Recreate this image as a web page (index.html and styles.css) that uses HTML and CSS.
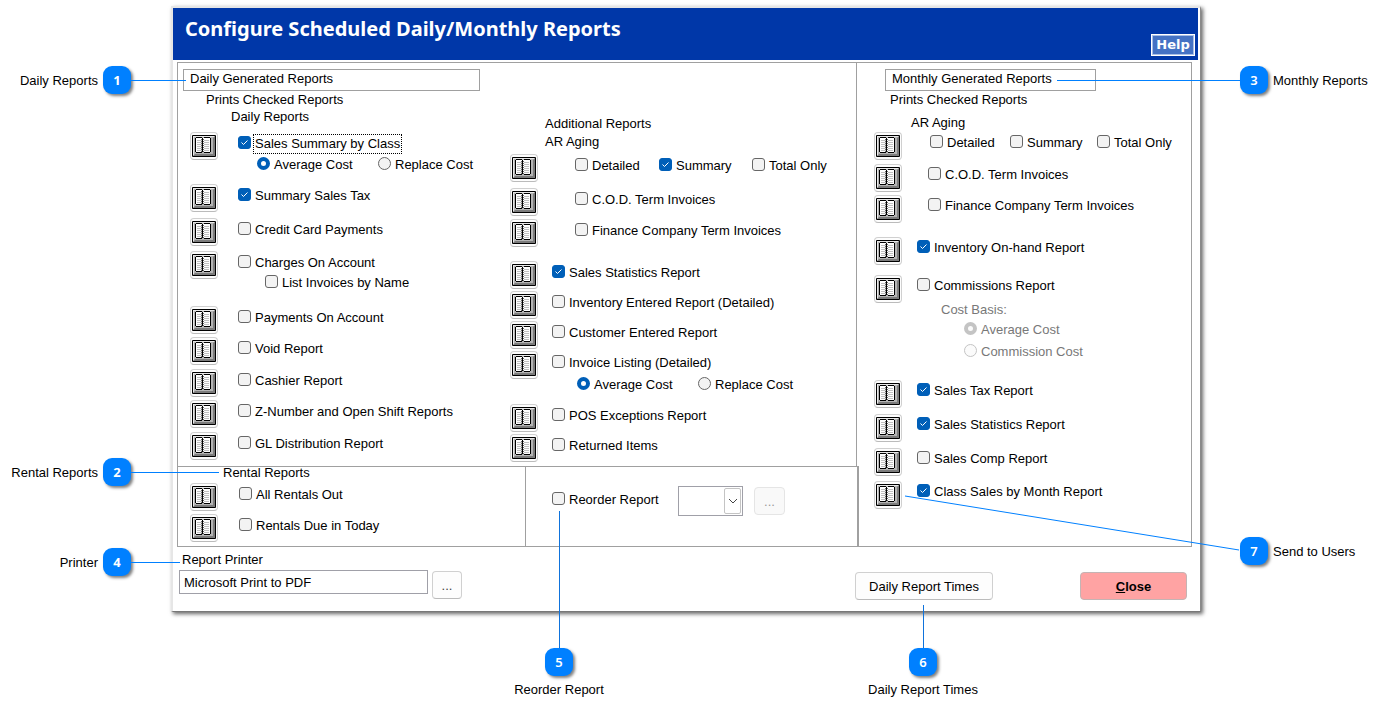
FILE: index.html
```html
<!DOCTYPE html>
<html lang="en">
<head>
<meta charset="utf-8">
<title>Configure Scheduled Daily/Monthly Reports</title>
<link rel="stylesheet" href="styles.css">
</head>
<body>
<svg class="defs" aria-hidden="true">
  <symbol id="book" viewBox="0 0 24 22">
    <rect width="24" height="22" rx="1" fill="#000"/>
    <rect x="1" y="1" width="22" height="20" fill="#b4b4b4"/>
    <path d="M1 1h22l-1 1H2v18l-1 1z" fill="#e8e8e8"/>
    <path d="M23 1v20H1l2-2h18V3z" fill="#7c7c7c"/>
    <rect x="4" y="3" width="14" height="14" fill="#fff"/>
    <path d="M5 5.500h5M5 7.500h5M5 9.500h5M5 11.500h5M5 13.500h5M5 15.500h5M12 5.500h5M12 7.500h5M12 9.500h5M12 11.500h5M12 13.500h5M12 15.500h5" stroke="#c0c0c0"/>
    <path d="M4 2.500h6M12 2.500h6M4 17.500h6M12 17.500h6M3.500 3v14M18.500 3v14M10.500 3v14" stroke="#000"/>
    <path d="M11.500 4v14M9.500 4v13" stroke="#000" stroke-dasharray="1 1" stroke-opacity=".6"/>
  </symbol>
</svg>
<main class="stage">
  <div class="window">
    <header class="titlebar">
      <h1>Configure Scheduled Daily/Monthly Reports</h1>
      <button class="help" type="button">Help</button>
    </header>

    <form class="panel">
      <div class="panel-left">
        <div class="upper">
          <section class="daily">
            <h2 class="boxed">Daily Generated Reports</h2>
            <p class="hint">Prints Checked Reports</p>
            <h3 class="sub">Daily Reports</h3>
            <ul class="rows">
              <li><button class="book" type="button" aria-label="Sales Summary users"><svg><use href="#book"/></svg></button>
                <div class="body"><label class="focused"><input type="checkbox" checked><span>Sales Summary by Class</span></label>
                  <div class="radios"><label><input type="radio" name="dcost" checked><span>Average Cost</span></label><label><input type="radio" name="dcost"><span>Replace Cost</span></label></div></div></li>
              <li><button class="book" type="button" aria-label="Sales Tax users"><svg><use href="#book"/></svg></button>
                <div class="body"><label><input type="checkbox" checked><span>Summary Sales Tax</span></label></div></li>
              <li><button class="book" type="button" aria-label="Credit Card users"><svg><use href="#book"/></svg></button>
                <div class="body"><label><input type="checkbox"><span>Credit Card Payments</span></label></div></li>
              <li><button class="book" type="button" aria-label="Charges users"><svg><use href="#book"/></svg></button>
                <div class="body"><label><input type="checkbox"><span>Charges On Account</span></label>
                  <div class="nested"><label><input type="checkbox"><span>List Invoices by Name</span></label></div></div></li>
              <li><button class="book" type="button" aria-label="Payments users"><svg><use href="#book"/></svg></button>
                <div class="body"><label><input type="checkbox"><span>Payments On Account</span></label></div></li>
              <li><button class="book" type="button" aria-label="Void users"><svg><use href="#book"/></svg></button>
                <div class="body"><label><input type="checkbox"><span>Void Report</span></label></div></li>
              <li><button class="book" type="button" aria-label="Cashier users"><svg><use href="#book"/></svg></button>
                <div class="body"><label><input type="checkbox"><span>Cashier Report</span></label></div></li>
              <li><button class="book" type="button" aria-label="Z-Number users"><svg><use href="#book"/></svg></button>
                <div class="body"><label><input type="checkbox"><span>Z-Number and Open Shift Reports</span></label></div></li>
              <li><button class="book" type="button" aria-label="GL Distribution users"><svg><use href="#book"/></svg></button>
                <div class="body"><label><input type="checkbox"><span>GL Distribution Report</span></label></div></li>
            </ul>
          </section>

          <section class="additional">
            <h2 class="plain">Additional Reports</h2>
            <h3 class="plain">AR Aging</h3>
            <ul class="rows">
              <li><button class="book" type="button" aria-label="AR Aging users"><svg><use href="#book"/></svg></button>
                <div class="body inset"><div class="aging"><label><input type="checkbox"><span>Detailed</span></label><label><input type="checkbox" checked><span>Summary</span></label><label><input type="checkbox"><span>Total Only</span></label></div></div></li>
              <li><button class="book" type="button" aria-label="C.O.D. users"><svg><use href="#book"/></svg></button>
                <div class="body inset"><label><input type="checkbox"><span>C.O.D. Term Invoices</span></label></div></li>
              <li><button class="book" type="button" aria-label="Finance users"><svg><use href="#book"/></svg></button>
                <div class="body inset"><label><input type="checkbox"><span>Finance Company Term Invoices</span></label></div></li>
              <li><button class="book" type="button" aria-label="Statistics users"><svg><use href="#book"/></svg></button>
                <div class="body"><label><input type="checkbox" checked><span>Sales Statistics Report</span></label></div></li>
              <li><button class="book" type="button" aria-label="Inventory users"><svg><use href="#book"/></svg></button>
                <div class="body"><label><input type="checkbox"><span>Inventory Entered Report (Detailed)</span></label></div></li>
              <li><button class="book" type="button" aria-label="Customer users"><svg><use href="#book"/></svg></button>
                <div class="body"><label><input type="checkbox"><span>Customer Entered Report</span></label></div></li>
              <li><button class="book" type="button" aria-label="Invoice users"><svg><use href="#book"/></svg></button>
                <div class="body"><label><input type="checkbox"><span>Invoice Listing (Detailed)</span></label>
                  <div class="radios"><label><input type="radio" name="acost" checked><span>Average Cost</span></label><label><input type="radio" name="acost"><span>Replace Cost</span></label></div></div></li>
              <li><button class="book" type="button" aria-label="POS users"><svg><use href="#book"/></svg></button>
                <div class="body"><label><input type="checkbox"><span>POS Exceptions Report</span></label></div></li>
              <li><button class="book" type="button" aria-label="Returned users"><svg><use href="#book"/></svg></button>
                <div class="body"><label><input type="checkbox"><span>Returned Items</span></label></div></li>
            </ul>
          </section>
        </div>

        <div class="lower">
          <section class="rental">
            <h2>Rental Reports</h2>
            <ul class="rows">
              <li><button class="book" type="button" aria-label="All Rentals users"><svg><use href="#book"/></svg></button>
                <div class="body"><label><input type="checkbox"><span>All Rentals Out</span></label></div></li>
              <li><button class="book" type="button" aria-label="Rentals Due users"><svg><use href="#book"/></svg></button>
                <div class="body"><label><input type="checkbox"><span>Rentals Due in Today</span></label></div></li>
            </ul>
          </section>
          <section class="reorder">
            <label><input type="checkbox"><span>Reorder Report</span></label>
            <div class="combo">
              <select aria-label="Reorder report type"><option></option></select>
              <span class="combo-arrow"><svg width="10" height="6" viewBox="0 0 10 6"><path d="M1 1l4 4 4-4" fill="none" stroke="#444"/></svg></span>
            </div>
            <button class="btn dots" type="button" disabled>...</button>
            <div class="callout down c5"><i class="line"></i><b class="badge">5</b><span>Reorder Report</span></div>
          </section>
        </div>
      </div>

      <section class="monthly">
        <h2 class="boxed">Monthly Generated Reports</h2>
        <p class="hint">Prints Checked Reports</p>
        <h3 class="sub">AR Aging</h3>
        <ul class="rows">
          <li><button class="book" type="button" aria-label="Monthly AR Aging users"><svg><use href="#book"/></svg></button>
            <div class="body inset"><div class="aging"><label><input type="checkbox"><span>Detailed</span></label><label><input type="checkbox"><span>Summary</span></label><label><input type="checkbox"><span>Total Only</span></label></div></div></li>
          <li><button class="book" type="button" aria-label="Monthly C.O.D. users"><svg><use href="#book"/></svg></button>
            <div class="body inset"><label><input type="checkbox"><span>C.O.D. Term Invoices</span></label></div></li>
          <li><button class="book" type="button" aria-label="Monthly Finance users"><svg><use href="#book"/></svg></button>
            <div class="body inset"><label><input type="checkbox"><span>Finance Company Term Invoices</span></label></div></li>
          <li><button class="book" type="button" aria-label="Inventory On-hand users"><svg><use href="#book"/></svg></button>
            <div class="body"><label><input type="checkbox" checked><span>Inventory On-hand Report</span></label></div></li>
          <li><button class="book" type="button" aria-label="Commissions users"><svg><use href="#book"/></svg></button>
            <div class="body"><label><input type="checkbox"><span>Commissions Report</span></label>
              <fieldset class="basis" disabled><legend>Cost Basis:</legend>
                <label><input type="radio" name="basis" checked><span>Average Cost</span></label>
                <label><input type="radio" name="basis"><span>Commission Cost</span></label></fieldset></div></li>
          <li><button class="book" type="button" aria-label="Monthly Tax users"><svg><use href="#book"/></svg></button>
            <div class="body"><label><input type="checkbox" checked><span>Sales Tax Report</span></label></div></li>
          <li><button class="book" type="button" aria-label="Monthly Statistics users"><svg><use href="#book"/></svg></button>
            <div class="body"><label><input type="checkbox" checked><span>Sales Statistics Report</span></label></div></li>
          <li><button class="book" type="button" aria-label="Sales Comp users"><svg><use href="#book"/></svg></button>
            <div class="body"><label><input type="checkbox"><span>Sales Comp Report</span></label></div></li>
          <li><button class="book" type="button" aria-label="Class Sales users"><svg><use href="#book"/></svg></button>
            <div class="body"><label><input type="checkbox" checked><span>Class Sales by Month Report</span></label></div></li>
        </ul>
      </section>
    </form>

    <footer class="footer">
      <div class="printer">
        <label for="printer">Report Printer</label>
        <div class="printer-row">
          <input id="printer" type="text" value="Microsoft Print to PDF" readonly>
          <button class="btn dots" type="button">...</button>
        </div>
      </div>
      <div class="actions">
        <div class="times">
          <button class="btn" type="button">Daily Report Times</button>
          <div class="callout down c6"><i class="line"></i><b class="badge">6</b><span>Daily Report Times</span></div>
        </div>
        <button class="btn close" type="button"><u>C</u>lose</button>
      </div>
    </footer>

    <div class="callout left c1"><span>Daily Reports</span><b class="badge">1</b><i class="line"></i></div>
    <div class="callout left c2"><span>Rental Reports</span><b class="badge">2</b><i class="line"></i></div>
    <div class="callout left c4"><span>Printer</span><b class="badge">4</b><i class="line"></i></div>
    <div class="callout right c3"><i class="line"></i><b class="badge">3</b><span>Monthly Reports</span></div>
    <svg class="slant" width="336" height="56" viewBox="0 0 336 56"><path d="M1 1L335 55" stroke="#0080ff" stroke-width="1" fill="none"/></svg>
    <div class="callout right c7"><b class="badge">7</b><span>Send to Users</span></div>
  </div>
</main>
</body>
</html>
```
FILE: styles.css
```css
* { box-sizing: border-box; }

body {
  margin: 0;
  background: #fff;
  color: #000;
  font: 13px/16px "Liberation Sans", Arial, sans-serif;
}

h1, h2, h3, p, ul, fieldset, legend { margin: 0; padding: 0; }
h2, h3 { font-size: 13px; font-weight: 400; }
ul { list-style: none; }
button, input, select { font: inherit; color: inherit; }

.defs { position: absolute; width: 0; height: 0; }
.stage { padding: 6px 183px 100px 171px; }

.window {
  position: relative;
  background: #fff;
  border: 2px solid #e6e6e6;
  border-right: 1px solid #8a8a8a;
  border-bottom: 1px solid #777;
  box-shadow: 2px 2px 4px rgba(0, 0, 0, .6);
  padding-right: 2px;
}

/* Title bar */
.titlebar {
  display: flex;
  justify-content: space-between;
  height: 52px;
  padding: 7px 3px 4px 12px;
  background: #0037a8;
}
.titlebar h1 {
  color: #fff;
  font: 700 20px/28px "Noto Sans", "Open Sans", sans-serif;
}
.help {
  align-self: flex-end;
  width: 44px;
  height: 22px;
  padding: 0;
  border: 1px solid #fff;
  background: #4472c4;
  box-shadow: inset 0 0 0 1px #a9bfe6;
  color: #fff;
  font: 700 13px/18px "DejaVu Sans", sans-serif;
}

/* Panel */
.panel {
  display: grid;
  grid-template-columns: 681fr 332fr;
  margin: 2px 6px 0 4px;
  border: 1px solid #a0a0a0;
}
.panel-left { display: flex; flex-direction: column; }
.upper {
  display: grid;
  grid-template-columns: 332fr 346fr;
  margin-right: 2px;
  border-right: 1px solid #a0a0a0;
}
.lower {
  display: grid;
  grid-template-columns: 348fr 331fr;
  flex: 1;
  border-top: 1px solid #a0a0a0;
  border-right: 2px solid #a0a0a0;
}

.boxed {
  height: 22px;
  padding: 1px 6px;
  border: 1px solid #a0a0a0;
}
.daily { padding: 6px 0 6px 5px; }
.daily .boxed { width: 297px; }
.daily .hint { padding: 1px 0 0 23px; }
.daily .sub { padding: 1px 0 7px 48px; }
.daily .rows { padding-left: 7px; grid-template-rows: 52px 34px 33px 55px 31px 32px 31px 32px 28px; }

.additional { padding-top: 53px; }
.additional .plain { padding: 0 0 2px 35px; }
.additional h3.plain { padding-bottom: 4px; }
.additional .rows { grid-template-rows: 34px 31px 42px 30px 30px 30px 53px 30px 28px; }

.monthly { padding: 6px 0 0 15px; }
.monthly .boxed { width: 211px; margin-left: 11px; }
.monthly .hint { padding: 1px 0 0 16px; }
.monthly .sub { padding: 7px 0 1px 37px; }
.monthly .rows { grid-template-rows: 32px 31px 42px 38px 105px 34px 34px 33px 28px; }

.rental { padding: 0 0 4px 12px; border-right: 1px solid #a0a0a0; }
.rental h2 { padding: 0 0 4px 33px; line-height: 12px; }
.rental .rows { grid-template-rows: 31px 28px; }

/* Report rows */
.rows { display: grid; }
.rows li { display: flex; gap: 20px; }
.rows .body { padding-top: 4px; }
.additional .rows li { gap: 14px; }
.monthly .rows li { gap: 15px; }
.rental .rows li { gap: 21px; }
.monthly .rows .body { padding-top: 3px; }
.additional .inset { padding-left: 23px; }
.monthly .inset { padding-left: 11px; }
.nested { padding: 4px 0 0 27px; }
.radios { display: grid; grid-template-columns: 121px auto; padding: 5px 0 0 19px; }
.additional .radios { padding: 6px 0 0 25px; }
.aging { display: grid; grid-template-columns: 84px 93px auto; }
.monthly .aging { grid-template-columns: 80px 87px auto; padding-left: 2px; }
.basis { border: 0; padding: 8px 0 0 24px; color: #787878; }
.basis legend { float: left; width: 100%; }
.basis label { clear: both; padding: 4px 0 2px 23px; }

.book {
  flex: none;
  display: grid;
  place-items: center;
  width: 28px;
  height: 28px;
  padding: 0;
  border: 1px solid #d0d0d0;
  border-bottom-color: #bbb;
  border-radius: 4px;
  background: #fdfdfd;
}
.book svg { width: 24px; height: 22px; }

label { display: flex; align-items: flex-start; gap: 4px; white-space: nowrap; }
.focused span { outline: 1px dotted #000; outline-offset: 1px; }

input[type="checkbox"], input[type="radio"] {
  appearance: none;
  flex: none;
  width: 13px;
  height: 13px;
  margin: 0;
  border: 1px solid #666;
  border-radius: 3px;
  background: #f3f3f3;
}
input[type="checkbox"]:checked {
  border-color: #005fb8;
  background: #005fb8 url("data:image/svg+xml,%3Csvg xmlns='http://www.w3.org/2000/svg' viewBox='0 0 11 11'%3E%3Cpath d='M2.500 5.500l2 2 4-4' fill='none' stroke='white'/%3E%3C/svg%3E") center / 11px no-repeat;
}
input[type="radio"] { border-radius: 50%; }
input[type="radio"]:checked { border: 4px solid #005fb8; background: #fff; }
.basis input[type="radio"], .basis input[type="radio"]:checked { border-color: #c4c4c4; background: #fbfbfb; }

/* Reorder */
.reorder { position: relative; display: flex; align-items: flex-start; padding: 19px 0 0 26px; }
.reorder > label { padding-top: 6px; width: 126px; }
.combo { position: relative; width: 65px; height: 30px; margin-right: 11px; }
.combo select {
  appearance: none;
  width: 100%;
  height: 100%;
  border: 1px solid #a0a0a8;
  border-radius: 0;
  background: #fff;
}
.combo-arrow {
  position: absolute;
  inset: 2px 2px 2px auto;
  display: grid;
  place-items: center;
  width: 17px;
  border: 1px solid #c4c4c4;
  border-radius: 2px;
  pointer-events: none;
}

/* Buttons */
.btn {
  height: 28px;
  padding: 2px 0 0;
  border: 1px solid #d0d0d0;
  border-bottom-color: #bbb;
  border-radius: 4px;
  background: #fdfdfd;
}
.dots { width: 30px; color: #444; }
.dots:disabled { margin-top: 1px; width: 31px; color: #999; border-color: #e5e5e5; background: #f9f9f9; }

/* Footer */
.footer {
  display: grid;
  grid-template-columns: 682fr 343fr;
  align-items: end;
  padding-bottom: 11px;
}
.printer { padding: 5px 0 1px 6px; }
.printer > label { padding: 0 0 2px 3px; }
.printer-row { display: flex; gap: 4px; }
.printer-row input {
  width: 249px;
  height: 24px;
  padding: 0 4px;
  border: 1px solid #a0a0a8;
  background: #fff;
}
.printer-row .btn { margin-top: 1px; }
.actions { display: flex; justify-content: space-between; padding-right: 11px; }
.times { position: relative; }
.times .btn { width: 138px; }
.close { width: 107px; background: #ffa3a3; font-weight: 700; border-color: #c4b4b4; }

/* Numbered callouts */
.callout { position: absolute; display: flex; align-items: center; white-space: nowrap; }
.callout .line { flex: none; background: #0080ff; height: 1px; }
.badge {
  flex: none;
  width: 28px;
  height: 28px;
  border-radius: 9px;
  background: #0080ff;
  box-shadow: 2px 2px 3px rgba(0, 0, 0, .5);
  color: #fff;
  font: 700 13px/28px "Noto Sans", "Open Sans", sans-serif;
  text-align: center;
}
.callout span { padding-top: 1px; }
.left .badge { margin-left: 5px; }
.right .badge { margin-right: 5px; }
.c1 { top: 58px; right: calc(100% - 13px); }
.c1 .line { width: 55px; }
.c2 { top: 450px; right: calc(100% - 46px); }
.c2 .line { width: 88px; }
.c4 { top: 540px; right: calc(100% - 7px); }
.c4 .line { width: 49px; }
.c3 { top: 58px; left: calc(100% - 143px); }
.c3 .line { width: 183px; }
.c7 { top: 529px; left: calc(100% + 40px); }
.slant { position: absolute; top: 487px; right: -40px; pointer-events: none; }
.down { flex-direction: column; width: 160px; }
.down .line { width: 1px; background: #0f73dc; }
.down .badge { margin-bottom: 5px; font-weight: 600; }
.right .badge { font-weight: 600; }
.c5 { top: 44px; left: -47px; }
.c5 .line { height: 137px; }
.c6 { top: 33px; left: -12px; }
.c6 .line { height: 43px; }
```
